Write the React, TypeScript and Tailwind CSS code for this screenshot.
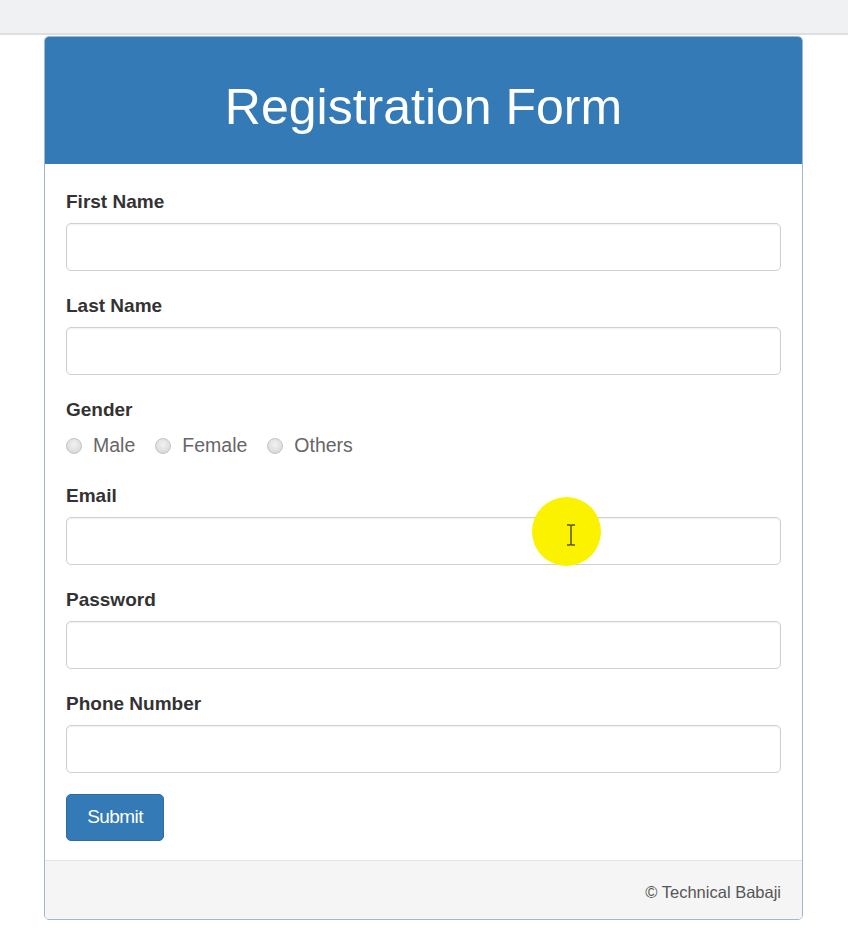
import React from "react";

const fields = [
  { id: "first", label: "First Name" },
  { id: "last", label: "Last Name" },
];

const moreFields = [
  { id: "email", label: "Email" },
  { id: "password", label: "Password" },
  { id: "phone", label: "Phone Number" },
];

const Field: React.FC<{ label: string }> = ({ label }) => (
  <div className="mb-[21px]">
    <label className="block text-[19px] font-bold leading-[28px] text-[#333] mb-[7px]">{label}</label>
    <div className="h-[48px] rounded-[5px] border border-[#cfcfcf] bg-white shadow-[inset_0_1px_2px_rgba(0,0,0,0.06)]" />
  </div>
);

const Radio: React.FC<{ label: string }> = ({ label }) => (
  <span className="flex items-center mr-[20px]">
    <span className="w-[16px] h-[16px] rounded-full border border-[#c4c4c4] bg-[radial-gradient(circle_at_50%_40%,#f2f2f2,#d2d2d2)]" />
    <span className="ml-[11px] text-[19.5px] text-[#666]">{label}</span>
  </span>
);

export default function App() {
  return (
    <div className="relative min-h-[943px] bg-white font-['Liberation_Sans',Arial,sans-serif]">
      <div className="h-[35px] bg-[#f0f1f3] border-b-2 border-[#dedfe1]" />
      <div className="pt-[1px] pl-[44px] w-[803px]">
        <div className="rounded-[5px] border border-[#9cb8d4] overflow-hidden">
          <div className="h-[128px] bg-[#337ab7] flex items-center justify-center -mx-px -mt-px">
            <h1 className="text-[50px] text-white leading-none mt-[14px]">Registration Form</h1>
          </div>
          <div className="pt-[24px] px-[21px] pb-[19px] bg-white">
            {fields.map((f) => (
              <Field key={f.id} label={f.label} />
            ))}
            <div className="mb-[21px]">
              <label className="block text-[19px] font-bold leading-[28px] text-[#333] mb-[7px]">Gender</label>
              <div className="flex items-center h-[30px]">
                <Radio label="Male" />
                <Radio label="Female" />
                <Radio label="Others" />
              </div>
            </div>
            {moreFields.map((f) => (
              <Field key={f.id} label={f.label} />
            ))}
            <button className="h-[47px] w-[98px] rounded-[5px] bg-[#337ab7] border border-[#2e6da4] text-white text-[19px] tracking-[-0.03em]">
              Submit
            </button>
          </div>
          <div className="h-[59px] bg-[#f5f5f5] border-t border-[#e3e3e3] flex items-center justify-end pr-[21px]">
            <span className="text-[16.5px] text-[#555] mt-[4px]">© Technical Babaji</span>
          </div>
        </div>
      </div>

      {/* cursor highlight */}
      <div className="absolute left-[532px] top-[497px] w-[69px] h-[69px] rounded-full bg-[#fbf200] blur-[0.5px] flex items-center justify-center">
        <svg width="12" height="22" viewBox="0 0 12 22" className="ml-[9px] mt-[6px]">
          <path d="M2 1h3l1 1 1-1h3M6 2v18M2 21h3l1-1 1 1h3" stroke="#5a5200" strokeWidth="1.5" fill="none" />
        </svg>
      </div>
    </div>
  );
}
